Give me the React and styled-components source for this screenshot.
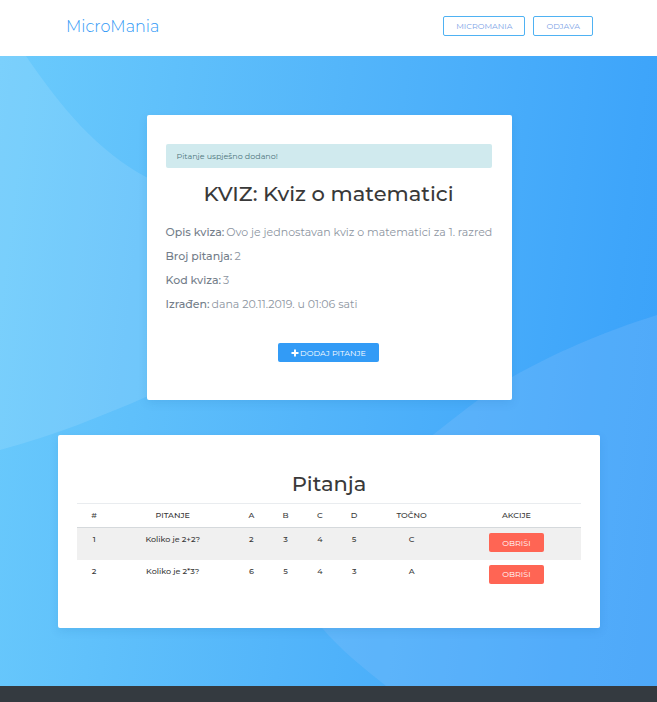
import React from "react";
import styled, { createGlobalStyle, css } from "styled-components";

const GlobalStyle = createGlobalStyle`
  *, *::before, *::after { box-sizing: border-box; }
  body {
    margin: 0;
    background: #fff;
    color: #393939;
    font-family: Montserrat, Inter, "Open Sans", sans-serif;
    font-size: 8px;
    line-height: 12px;
  }
`;

const Page = styled.div`
  display: flex;
  flex-direction: column;
  min-height: 100vh;
`;

const Header = styled.header`
  display: flex;
  align-items: flex-start;
  justify-content: space-between;
  height: 56px;
  padding: 16px 64px 0 66px;
  background: #fff;
`;

const Brand = styled.a`
  color: #2f98f6;
  font-size: 16px;
  font-weight: 300;
  line-height: 22px;
  text-decoration: none;
`;

const Nav = styled.nav`
  display: flex;
  gap: 8px;
`;

const NavLink = styled.a`
  height: 20px;
  padding: 0 12px;
  border: 1px solid #4fb2f3;
  border-radius: 2px;
  color: #7b9fe6;
  font-size: 8px;
  line-height: 18px;
  text-decoration: none;
`;

const Hero = styled.main`
  position: relative;
  display: flex;
  flex: 1;
  flex-direction: column;
  align-items: center;
  gap: 35px;
  padding: 59px 57px 58px 58px;
  background: linear-gradient(97deg, #6bcbfc 0%, #53b5fa 48%, #3ea5fa 88%, #3aa1f9 100%);
`;

const Backdrop = styled.svg`
  position: absolute;
  inset: 0;
  width: 100%;
  height: 100%;
`;

const Card = styled.section`
  position: relative;
  width: 100%;
  max-width: ${({ $narrow }) => ($narrow ? "365px" : "none")};
  padding: ${({ $narrow }) => ($narrow ? "29px 20px 38px 19px" : "35px 19px 36px")};
  border-radius: 2px;
  background: #fff;
  box-shadow: 0 3px 10px rgba(20, 90, 160, 0.12);
`;

const Alert = styled.div`
  padding: 6px 11px;
  border-radius: 2px;
  background: #d0eaee;
  color: #4d757c;
  line-height: 12px;
`;

const Title = styled.h1`
  margin: ${({ $spaced }) => ($spaced ? "12px 0 18px" : "0 0 5px")};
  color: #393939;
  font-size: 21px;
  font-weight: 500;
  line-height: 28px;
  text-align: center;
`;

const Details = styled.dl`
  display: grid;
  gap: 12px;
  margin: 0 0 33px;
  color: #8d959f;
  font-size: 11px;
  line-height: 12px;
`;

const Detail = styled.div`
  display: flex;
  gap: 2px;
  white-space: nowrap;
`;

const Term = styled.dt`
  color: #747e8a;
  font-weight: 500;
`;

const Value = styled.dd`
  margin: 0;
`;

const Actions = styled.div`
  display: flex;
  justify-content: center;
`;

const tones = {
  primary: css`background: #329bf6;`,
  danger: css`background: #ff6554;`,
};

const Button = styled.button`
  display: inline-flex;
  align-items: center;
  justify-content: center;
  gap: 1px;
  height: 19px;
  padding: 0 13px;
  border: 0;
  border-radius: 2px;
  color: #fff;
  font: inherit;
  font-weight: 400;
  line-height: 12px;
  cursor: pointer;
  ${({ $tone }) => tones[$tone]}
`;

const Table = styled.table`
  width: 100%;
  border-collapse: collapse;
  table-layout: fixed;
  text-align: center;
`;

const Column = styled.col`
  width: ${({ $share }) => $share / 5}%;
`;

const HeadCell = styled.th`
  height: 24px;
  padding: 0 0 2px;
  border-top: 1px solid #e9ecef;
  border-bottom: 1px solid #d5d9dc;
  font-weight: 500;
`;

const Row = styled.tr`
  height: 32px;
  &:nth-child(odd) { background: #f0f0f0; }
`;

const Cell = styled.td`
  padding: 5px 0;
  font-weight: 500;
  vertical-align: top;
`;

const Footer = styled.footer`
  height: 16px;
  background: #343a40;
`;

const details = [
  ["Opis kviza:", "Ovo je jednostavan kviz o matematici za 1. razred"],
  ["Broj pitanja:", "2"],
  ["Kod kviza:", "3"],
  ["Izrađen:", "dana 20.11.2019. u 01:06 sati"],
];

// Column widths are shares of 500.
const columns = [
  ["#", 34],
  ["PITANJE", 122],
  ["A", 34],
  ["B", 34],
  ["C", 34],
  ["D", 34],
  ["TOČNO", 80],
  ["AKCIJE", 128],
];

const questions = [
  ["1", "Koliko je 2+2?", "2", "3", "4", "5", "C"],
  ["2", "Koliko je 2*3?", "6", "5", "4", "3", "A"],
];

function PlusIcon() {
  return (
    <svg width="8" height="8" viewBox="0 0 8 8" aria-hidden="true">
      <path d="M4 1.2v5.6M1.2 4h5.6" stroke="#fff" strokeWidth="1.9" strokeLinecap="round" />
    </svg>
  );
}

export default function App() {
  return (
    <Page>
      <GlobalStyle />
      <Header>
        <Brand href="#">MicroMania</Brand>
        <Nav>
          <NavLink href="#micromania">MICROMANIA</NavLink>
          <NavLink href="#odjava">ODJAVA</NavLink>
        </Nav>
      </Header>
      <Hero>
        <Backdrop viewBox="0 0 657 630" preserveAspectRatio="none" aria-hidden="true">
          <path
            d="M0 0H26C62 53 98 95 146 121C205 145 272 168 268 220C264 270 210 312 146 341C100 361 55 379 0 394Z"
            fill="#fff"
            fillOpacity="0.11"
          />
          <path
            d="M657 259C600 277 555 297 512 321C500 328 489 336 478 344C463 355 449 366 434 378C375 425 315 450 309 500C306 532 309 557 322 572C339 592 362 611 386 630H657Z"
            fill="#9cc8fc"
            fillOpacity="0.21"
          />
        </Backdrop>
        <Card $narrow>
          <Alert role="status">Pitanje uspješno dodano!</Alert>
          <Title $spaced>KVIZ: Kviz o matematici</Title>
          <Details>
            {details.map(([term, value]) => (
              <Detail key={term}>
                <Term>{term}</Term>
                <Value>{value}</Value>
              </Detail>
            ))}
          </Details>
          <Actions>
            <Button type="button" $tone="primary">
              <PlusIcon />
              DODAJ PITANJE
            </Button>
          </Actions>
        </Card>
        <Card>
          <Title as="h2">Pitanja</Title>
          <Table>
            <colgroup>
              {columns.map(([name, share]) => (
                <Column key={name} $share={share} />
              ))}
            </colgroup>
            <thead>
              <tr>
                {columns.map(([name]) => (
                  <HeadCell key={name} scope="col">{name}</HeadCell>
                ))}
              </tr>
            </thead>
            <tbody>
              {questions.map((cells) => (
                <Row key={cells[0]}>
                  {cells.map((text, index) => (
                    <Cell key={columns[index][0]}>{text}</Cell>
                  ))}
                  <Cell>
                    <Button type="button" $tone="danger">OBRIŠI</Button>
                  </Cell>
                </Row>
              ))}
            </tbody>
          </Table>
        </Card>
      </Hero>
      <Footer />
    </Page>
  );
}
